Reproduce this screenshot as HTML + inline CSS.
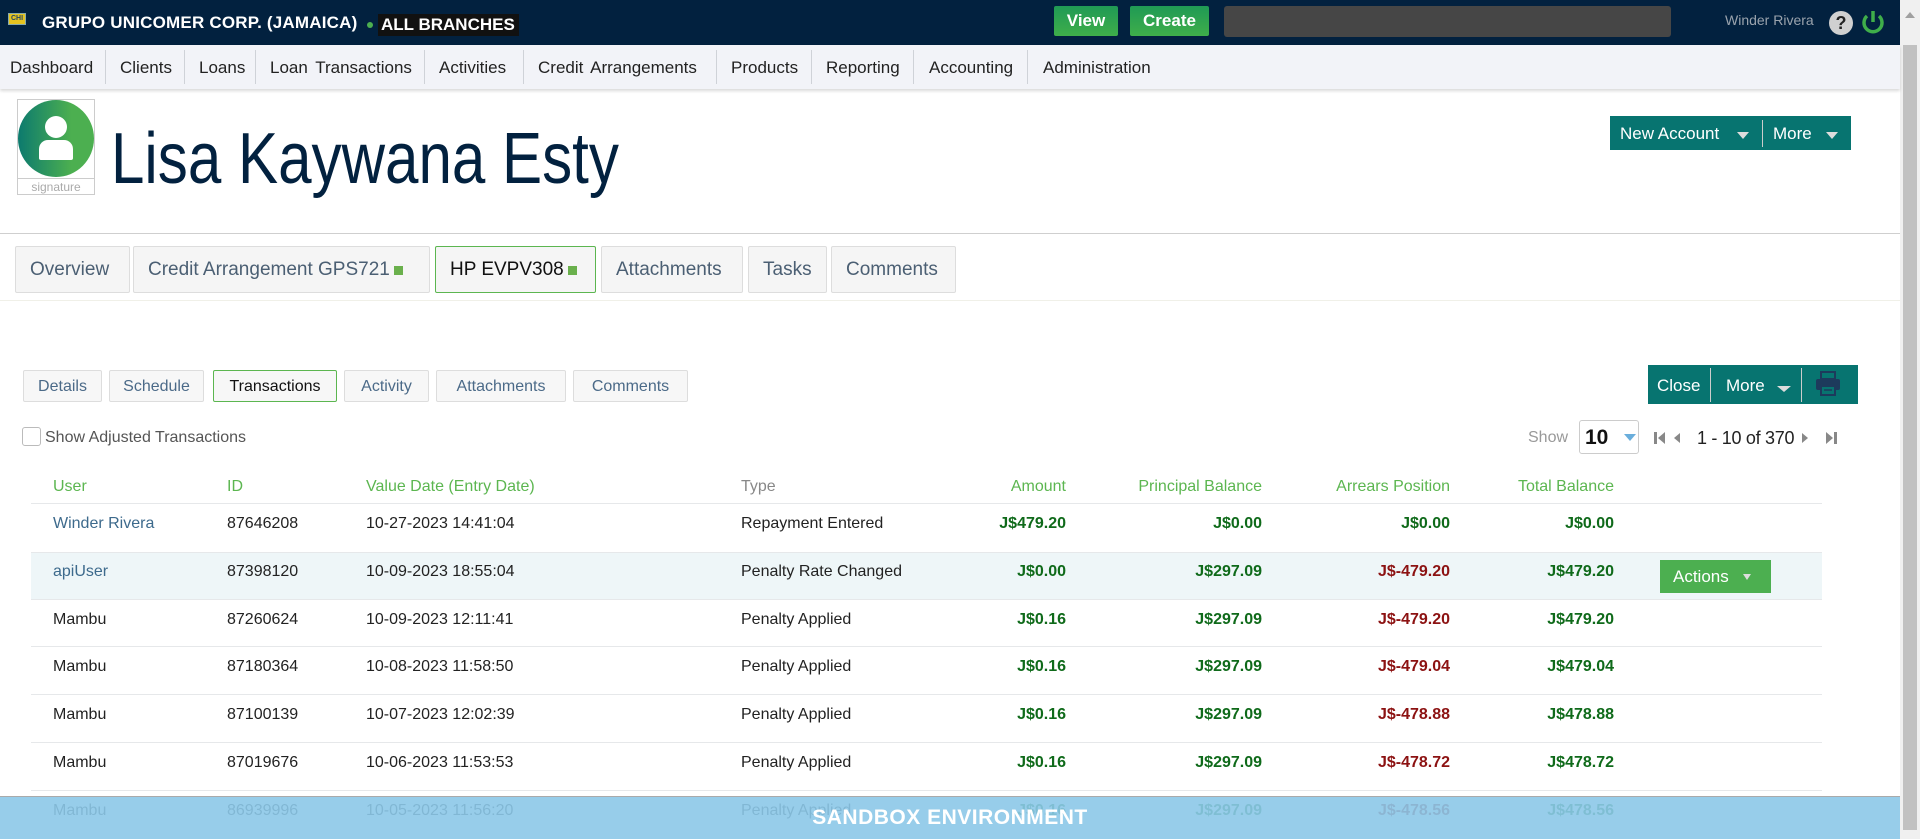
<!DOCTYPE html>
<html><head><meta charset="utf-8">
<style>
*{box-sizing:border-box;margin:0;padding:0}
body{width:1920px;height:839px;overflow:hidden;font-family:"Liberation Sans",sans-serif;background:#fff;position:relative;color:#222}
.abs{position:absolute;white-space:nowrap}
#top{left:0;top:0;width:1900px;height:45px;background:#02213f}
#nav{left:0;top:45px;width:1900px;height:44px;background:#f2f3f8;box-shadow:0 2px 3px rgba(0,0,0,.15)}
.navi{position:absolute;top:1px;height:44px;line-height:44px;font-size:17px;color:#222;white-space:nowrap}
.sep{position:absolute;top:5px;width:1px;height:34px;background:#cfd2d8}
.btn{position:absolute;color:#fff;font-weight:bold;font-size:17px;text-align:center;border-radius:2px;background:linear-gradient(#1f9a55,#3fae4a)}
.tab{position:absolute;top:246px;height:47px;line-height:45px;background:#f5f5f5;border:1px solid #ddd;border-radius:2px;font-size:19px;color:#4b5f73;padding-left:14px;white-space:nowrap}
.sq{display:inline-block;width:9px;height:9px;background:#6ab04c;margin-left:4px}
.st{position:absolute;top:370px;height:32px;line-height:32px;background:#f7f7f7;border:1px solid #ddd;border-radius:2px;font-size:16px;color:#4b6a88;text-align:center}
.teal{background:#077470;color:#fff}
.th{position:absolute;top:478px;font-size:16px;color:#5cb650;white-space:nowrap}
.c{position:absolute;font-size:16px;white-space:nowrap}
.r{text-align:right}
.g{color:#0f6a1a;font-weight:bold}
.red{color:#8c1212;font-weight:bold}
.lnk{color:#3d6a8c}
.hl{position:absolute;left:31px;width:1791px;height:1px;background:#e6e8ea}
</style></head><body>
<div id="top" class="abs"></div>
<div class="abs" style="left:8px;top:13px;width:18px;height:12px;background:#e5c31f;border:1px solid #8aa;font-size:7px;color:#246;font-weight:bold;line-height:10px;text-align:center">CHI</div>
<div class="abs" style="left:42px;top:13px;font-size:17px;font-weight:bold;color:#fff;letter-spacing:0.2px">GRUPO UNICOMER CORP. (JAMAICA)</div>
<div class="abs" style="left:367px;top:22px;width:6px;height:6px;border-radius:50%;background:#4caf50"></div>
<div class="abs" style="left:378px;top:14px;width:141px;height:22px;background:#111;color:#fff;font-weight:bold;font-size:17px;line-height:22px;padding-left:3px">ALL BRANCHES</div>
<div class="btn" style="left:1054px;top:6px;width:64px;height:30px;line-height:30px">View</div>
<div class="btn" style="left:1130px;top:6px;width:79px;height:30px;line-height:30px">Create</div>
<div class="abs" style="left:1224px;top:6px;width:447px;height:31px;background:#464646;border-radius:3px"></div>
<div class="abs" style="left:1725px;top:12px;font-size:14px;color:#9aa3ad">Winder Rivera</div>
<div class="abs" style="left:1829px;top:11px;width:24px;height:24px;border-radius:50%;background:#d0d0d0;color:#222;font-weight:bold;font-size:18px;text-align:center;line-height:24px">?</div>
<svg class="abs" style="left:1860px;top:8px" width="26" height="28" viewBox="0 0 26 28"><path d="M7 8 A9 9 0 1 0 19 8" fill="none" stroke="#3fae4a" stroke-width="3.5"/><line x1="13" y1="3" x2="13" y2="14" stroke="#3fae4a" stroke-width="3.5"/></svg>
<div class="abs" style="left:1900px;top:0;width:20px;height:839px;background:#f0f0f0"></div>
<div class="abs" style="left:1903px;top:45px;width:14px;height:785px;background:#c1c1c1"></div>
<div class="abs" style="left:1905px;top:12px;width:0;height:0;border-left:5px solid transparent;border-right:5px solid transparent;border-bottom:6px solid #a0a0a0"></div>

<div id="nav" class="abs">
<div class="navi" style="left:10px">Dashboard</div><div class="sep" style="left:105px"></div>
<div class="navi" style="left:120px">Clients</div><div class="sep" style="left:184px"></div>
<div class="navi" style="left:199px">Loans</div><div class="sep" style="left:255px"></div>
<div class="navi" style="left:270px;word-spacing:3px">Loan Transactions</div><div class="sep" style="left:424px"></div>
<div class="navi" style="left:439px">Activities</div><div class="sep" style="left:523px"></div>
<div class="navi" style="left:538px;word-spacing:3px">Credit Arrangements</div><div class="sep" style="left:716px"></div>
<div class="navi" style="left:731px">Products</div><div class="sep" style="left:811px"></div>
<div class="navi" style="left:826px">Reporting</div><div class="sep" style="left:913px"></div>
<div class="navi" style="left:929px">Accounting</div><div class="sep" style="left:1027px"></div>
<div class="navi" style="left:1043px">Administration</div>
</div>

<div class="abs" style="left:17px;top:99px;width:78px;height:96px;border:1px solid #ccc"></div>
<div class="abs" style="left:18px;top:100px;width:76px;height:77px;border-radius:50%;background:linear-gradient(90deg,#0c7a6e,#4caf50 70%)"></div>
<div class="abs" style="left:45px;top:116px;width:22px;height:22px;border-radius:50%;background:#fff"></div>
<div class="abs" style="left:39px;top:140px;width:34px;height:20px;border-radius:9px 9px 2px 2px;background:#fff"></div>
<div class="abs" style="left:18px;top:178px;width:76px;height:16px;border-top:1px solid #ccc;font-size:12px;color:#aaa;text-align:center;line-height:16px">signature</div>
<div class="abs" style="left:111px;top:118px;font-size:72px;color:#02213f;transform:scaleX(0.835);transform-origin:left top;line-height:82px">Lisa Kaywana Esty</div>

<div class="abs teal" style="left:1610px;top:116px;width:241px;height:34px"></div>
<div class="abs" style="left:1620px;top:124px;font-size:17px;color:#fff">New Account</div>
<div class="abs" style="left:1737px;top:132px;border-left:6px solid transparent;border-right:6px solid transparent;border-top:7px solid #ddd"></div>
<div class="abs" style="left:1762px;top:120px;width:1px;height:27px;background:#ccc"></div>
<div class="abs" style="left:1773px;top:124px;font-size:17px;color:#fff">More</div>
<div class="abs" style="left:1826px;top:132px;border-left:6px solid transparent;border-right:6px solid transparent;border-top:7px solid #ddd"></div>

<div class="abs" style="left:0;top:233px;width:1900px;height:1px;background:#cfcfcf"></div>
<div class="tab" style="left:15px;width:115px">Overview</div>
<div class="tab" style="left:133px;width:297px">Credit Arrangement GPS721<span class="sq"></span></div>
<div class="tab" style="left:435px;width:161px;border-color:#5cb650;color:#111">HP EVPV308<span class="sq"></span></div>
<div class="tab" style="left:601px;width:142px">Attachments</div>
<div class="tab" style="left:748px;width:79px">Tasks</div>
<div class="tab" style="left:831px;width:125px">Comments</div>
<div class="abs" style="left:0;top:300px;width:1900px;height:1px;background:#f0f0e8"></div>

<div class="st" style="left:23px;width:79px">Details</div>
<div class="st" style="left:109px;width:95px">Schedule</div>
<div class="st" style="left:213px;width:124px;border-color:#5cb650;color:#111">Transactions</div>
<div class="st" style="left:344px;width:85px">Activity</div>
<div class="st" style="left:436px;width:130px">Attachments</div>
<div class="st" style="left:573px;width:115px">Comments</div>

<div class="abs teal" style="left:1648px;top:365px;width:210px;height:39px"></div>
<div class="abs" style="left:1657px;top:376px;font-size:17px;color:#fff">Close</div>
<div class="abs" style="left:1710px;top:368px;width:1px;height:34px;background:#ccc"></div>
<div class="abs" style="left:1726px;top:376px;font-size:17px;color:#fff">More</div>
<div class="abs" style="left:1777px;top:386px;border-left:7px solid transparent;border-right:7px solid transparent;border-top:6px solid #ddd"></div>
<div class="abs" style="left:1801px;top:368px;width:1px;height:34px;background:#ccc"></div>
<svg class="abs" style="left:1815px;top:370px" width="26" height="27" viewBox="0 0 26 27"><rect x="6" y="2" width="14" height="7" fill="none" stroke="#1d3a5c" stroke-width="2"/><rect x="1" y="9" width="24" height="11" rx="2" fill="#1d3a5c"/><rect x="6" y="16" width="14" height="9" fill="#077470" stroke="#1d3a5c" stroke-width="2"/><line x1="9" y1="20" x2="17" y2="20" stroke="#1d3a5c" stroke-width="1.5"/></svg>

<div class="abs" style="left:22px;top:427px;width:19px;height:19px;border:1px solid #bbb;border-radius:3px"></div>
<div class="abs" style="left:45px;top:429px;font-size:16px;color:#555">Show Adjusted Transactions</div>
<div class="abs" style="left:1528px;top:429px;font-size:16px;color:#999">Show</div>
<div class="abs" style="left:1579px;top:420px;width:60px;height:34px;border:1px solid #ccc;border-radius:3px"></div>
<div class="abs" style="left:1585px;top:426px;font-size:21px;font-weight:bold;color:#111">10</div>
<div class="abs" style="left:1624px;top:434px;border-left:6px solid transparent;border-right:6px solid transparent;border-top:7px solid #6aaedc"></div>
<svg class="abs" style="left:1653px;top:430px" width="190" height="16"><rect x="1" y="2" width="3" height="12" fill="#888"/><path d="M12 2 L5 8 L12 14Z" fill="#888"/><path d="M27 3 L21 8 L27 13Z" fill="#888"/><path d="M149 3 L155 8 L149 13Z" fill="#888"/><path d="M173 2 L180 8 L173 14Z" fill="#888"/><rect x="181" y="2" width="3" height="12" fill="#888"/></svg>
<div class="abs" style="left:1697px;top:428px;font-size:18px;color:#222;letter-spacing:-0.3px">1 - 10 of 370</div>

<div class="th" style="left:53px">User</div>
<div class="th" style="left:227px">ID</div>
<div class="th" style="left:366px">Value Date (Entry Date)</div>
<div class="th" style="left:741px;color:#888">Type</div>
<div class="th r" style="left:900px;width:166px">Amount</div>
<div class="th r" style="left:1070px;width:192px">Principal Balance</div>
<div class="th r" style="left:1270px;width:180px">Arrears Position</div>
<div class="th r" style="left:1460px;width:154px">Total Balance</div>
<div class="hl" style="top:503px"></div>
<div class="abs" style="left:31px;top:552px;width:1791px;height:47px;background:#eef6f8"></div>
<div class="hl" style="top:552px"></div><div class="hl" style="top:599px"></div><div class="hl" style="top:646px"></div><div class="hl" style="top:694px"></div><div class="hl" style="top:742px"></div><div class="hl" style="top:790px"></div>

<div class="abs" style="left:1660px;top:560px;width:111px;height:33px;background:#4caf50;color:#fff;font-size:17px;line-height:33px;padding-left:13px">Actions</div>
<div class="abs" style="left:1743px;top:574px;border-left:4px solid transparent;border-right:4px solid transparent;border-top:6px solid #ddd"></div>

<div id="rows"></div>
<script>
var d=[["Winder Rivera",1,"87646208","10-27-2023 14:41:04","Repayment Entered","J$479.20","J$0.00","J$0.00",0,"J$0.00"],
["apiUser",1,"87398120","10-09-2023 18:55:04","Penalty Rate Changed","J$0.00","J$297.09","J$-479.20",1,"J$479.20"],
["Mambu",0,"87260624","10-09-2023 12:11:41","Penalty Applied","J$0.16","J$297.09","J$-479.20",1,"J$479.20"],
["Mambu",0,"87180364","10-08-2023 11:58:50","Penalty Applied","J$0.16","J$297.09","J$-479.04",1,"J$479.04"],
["Mambu",0,"87100139","10-07-2023 12:02:39","Penalty Applied","J$0.16","J$297.09","J$-478.88",1,"J$478.88"],
["Mambu",0,"87019676","10-06-2023 11:53:53","Penalty Applied","J$0.16","J$297.09","J$-478.72",1,"J$478.72"],
["Mambu",0,"86939996","10-05-2023 11:56:20","Penalty Applied","J$0.16","J$297.09","J$-478.56",1,"J$478.56"]];
var h="";d.forEach(function(r,i){var t=515+i*47.8;
h+='<div class="c '+(r[1]?'lnk':'')+'" style="left:53px;top:'+t+'px">'+r[0]+'</div>'+
'<div class="c" style="left:227px;top:'+t+'px">'+r[2]+'</div>'+
'<div class="c" style="left:366px;top:'+t+'px">'+r[3]+'</div>'+
'<div class="c" style="left:741px;top:'+t+'px">'+r[4]+'</div>'+
'<div class="c r g" style="left:900px;width:166px;top:'+t+'px">'+r[5]+'</div>'+
'<div class="c r g" style="left:1070px;width:192px;top:'+t+'px">'+r[6]+'</div>'+
'<div class="c r '+(r[8]?'red':'g')+'" style="left:1270px;width:180px;top:'+t+'px">'+r[7]+'</div>'+
'<div class="c r g" style="left:1460px;width:154px;top:'+t+'px">'+r[9]+'</div>';});
document.getElementById("rows").innerHTML=h;
</script>
<div class="abs" style="left:0;top:796px;width:1900px;height:43px;background:rgba(140,200,232,0.9);border-top:1px solid #aaa"></div>
<div class="abs" style="left:0;top:806px;width:1900px;text-align:center;font-size:21px;font-weight:bold;color:#fff;letter-spacing:0.5px">SANDBOX ENVIRONMENT</div>
</body></html>
